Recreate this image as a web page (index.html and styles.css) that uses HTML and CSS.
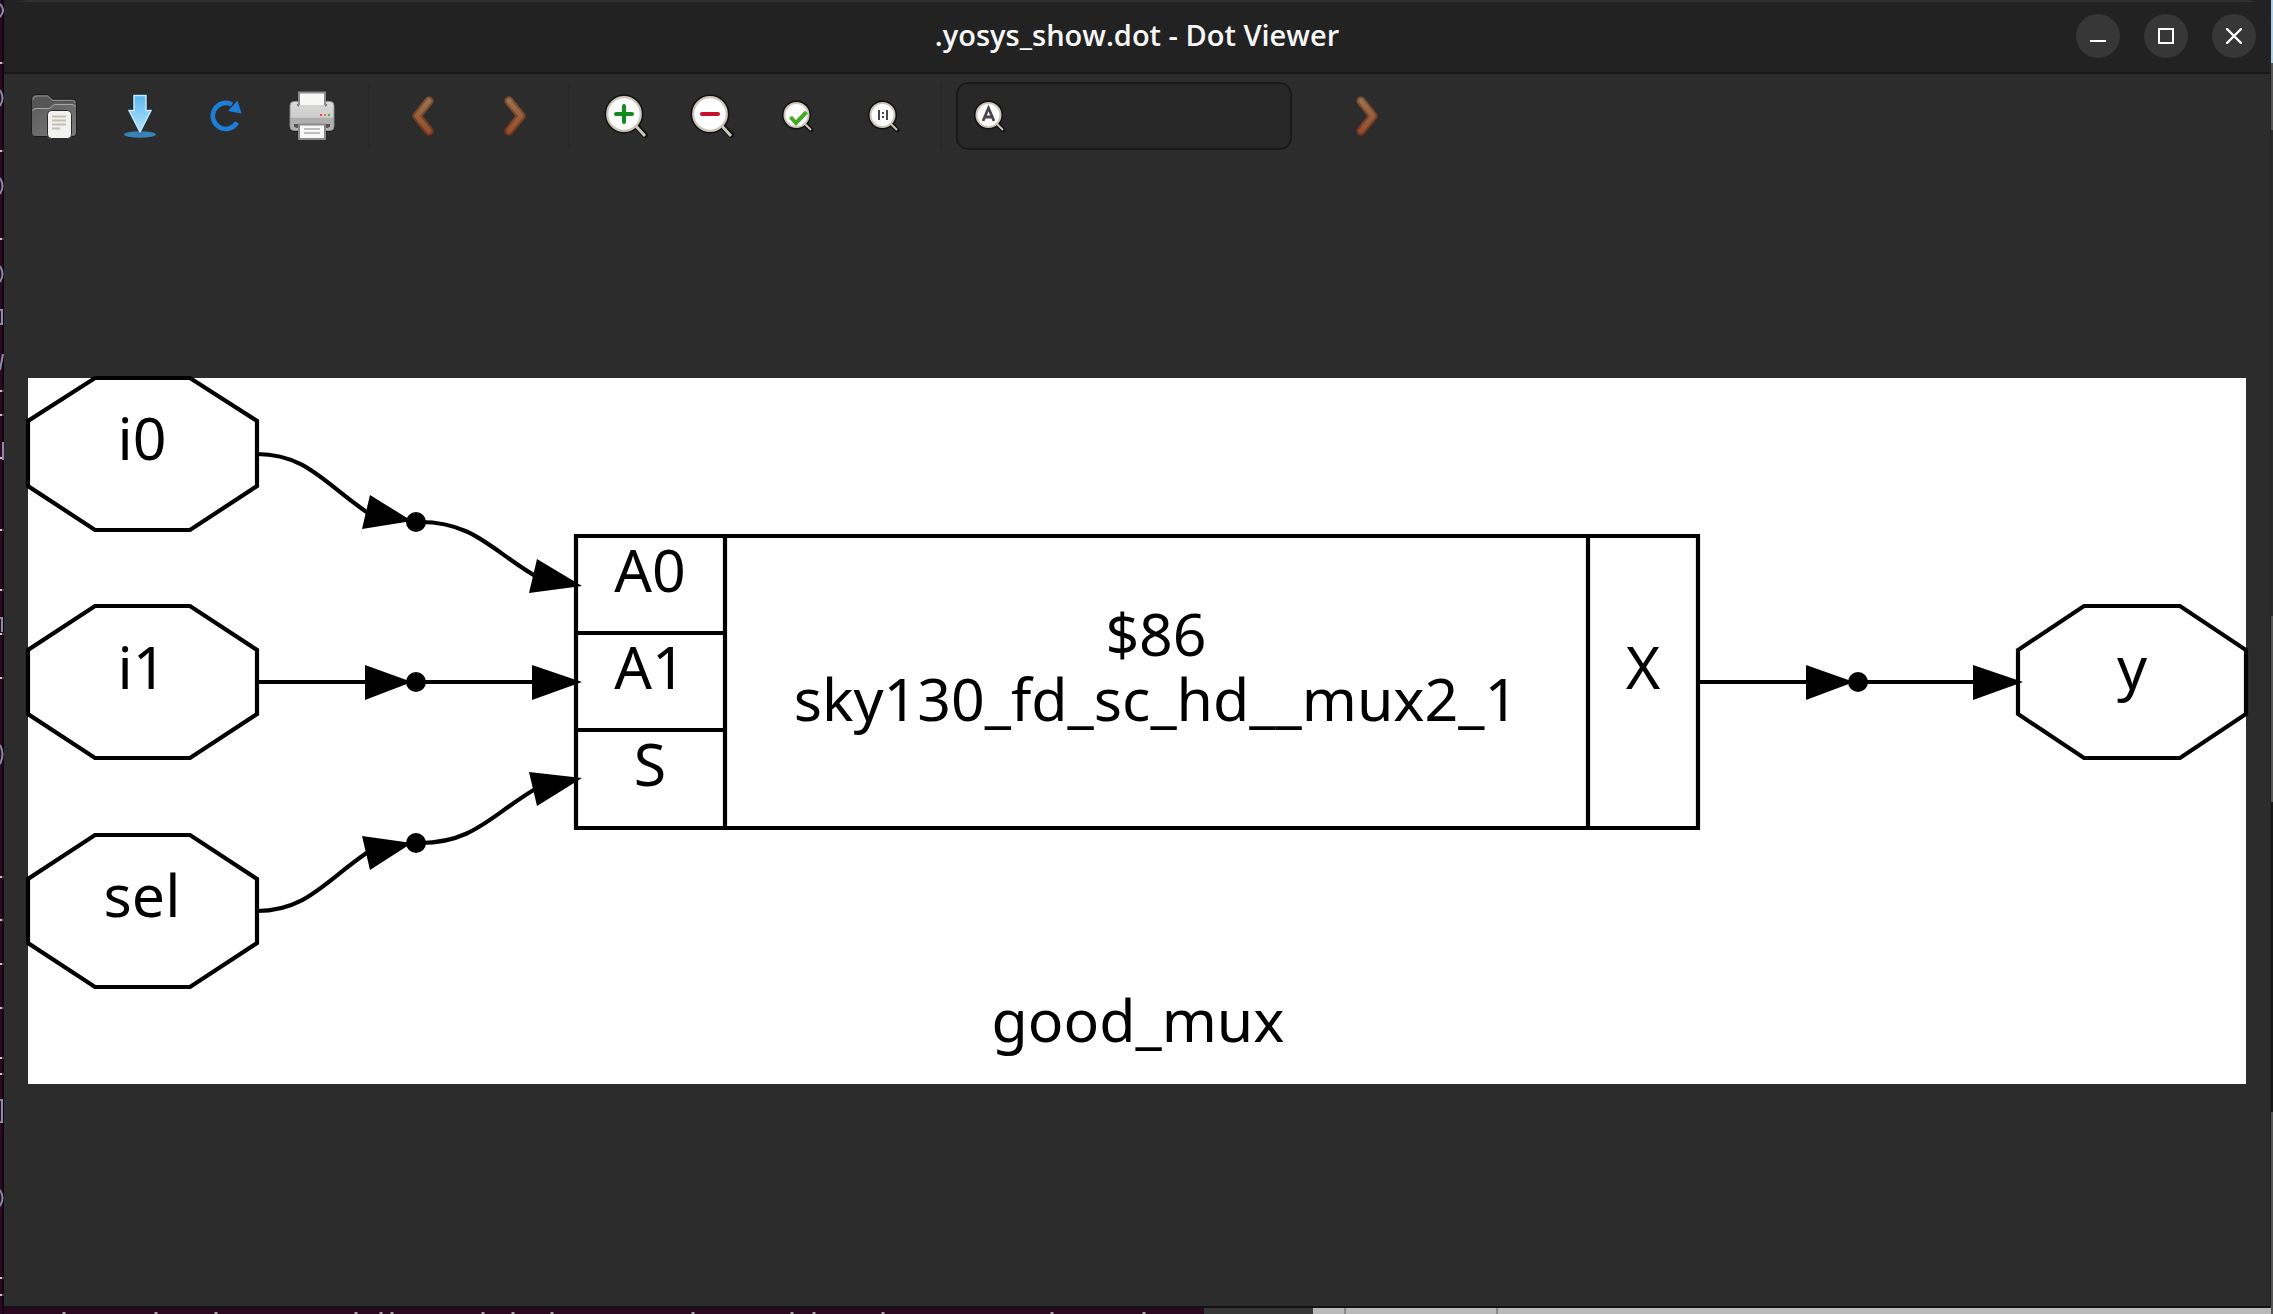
FILE: index.html
```html
<!DOCTYPE html>
<html lang="en">
<head>
<meta charset="utf-8">
<title>.yosys_show.dot - Dot Viewer</title>
<meta name="viewport" content="width=device-width, initial-scale=1">
<link rel="stylesheet" href="styles.css">
</head>
<body class="desktop">
<!-- slivers of the windows behind -->
<svg class="behind behind-left" width="4" height="1314" viewBox="0 0 4 1314" aria-hidden="true">
  <path d="M0 63h2M0 151h2M0 239h2M0 391h2M0 415h2M0 458h2M0 530h2M0 590h2M0 634h2M0 678h2M0 877h2M0 920h2M0 964h2M0 1008h2M0 1058h2M0 1074h2M0 1278h2M0 1295h2" stroke="#c9c4c8" stroke-width="2"/>
  <path d="M2 63h2M2 151h2M2 239h2M2 391h2M2 415h2M2 458h2M2 530h2M2 590h2M2 634h2M2 678h2M2 877h2M2 920h2M2 964h2M2 1008h2M2 1058h2M2 1074h2M2 1278h2M2 1295h2" stroke="#3c393b" stroke-width="2"/>
  <path d="M0 90q5 8 0 16M0 178q5 8 0 16M0 266q5 8 0 16M0 745q5 9 0 19M0 1190q5 8 0 16M0 4q6 6 0 13M0 370l3-16M0 310h2v14h-2M0 618h2v14M3 442v18M0 1100h2v22h-2" fill="none" stroke="#8b89a8" stroke-width="2"/>
</svg>
<svg class="behind behind-bottom" width="1204" height="6" viewBox="0 0 1204 6" aria-hidden="true">
  <path d="M64 4v2M156 4v2M216 4v2M356 4v2M381 4v2M392 4v2M483 4v2M513 4v2M552 4v2M693 4v2M792 4v2M814 4v2M883 4v2M1052 4v2M1144 4v2" stroke="#aaa5a9" stroke-width="3"/>
</svg>

<main class="window">
  <header class="titlebar">
    <h1 class="title">.yosys_show.dot - Dot Viewer</h1>
    <div class="controls">
      <button class="control" type="button" aria-label="Minimize"><svg width="16" height="16" viewBox="0 0 16 16"><path d="M0 13h16" stroke="#fff" stroke-width="2"/></svg></button>
      <button class="control" type="button" aria-label="Maximize"><svg width="16" height="16" viewBox="0 0 16 16"><path d="M1 1h14v14H1z" fill="none" stroke="#fff" stroke-width="2"/></svg></button>
      <button class="control" type="button" aria-label="Close"><svg width="16" height="16" viewBox="0 0 16 16"><path d="M1 1l14 14M15 1L1 15" stroke="#fff" stroke-width="2.4" stroke-linecap="round"/></svg></button>
    </div>
  </header>

  <div class="toolbar" role="toolbar" aria-label="Main">
    <button class="tool" type="button" aria-label="Open">
      <svg width="48" height="48" viewBox="0 0 48 48">
        <defs><linearGradient id="folder" x1="0" y1="0" x2="1" y2="1"><stop offset="0" stop-color="#5c5c5c"/><stop offset="1" stop-color="#7a7a7a"/></linearGradient></defs>
        <path d="M1.500 7Q1.500 2.500 6 2.500H18L23 7H42Q46.500 7 46.500 11V40Q46.500 44.500 42 44.500H6Q1.500 44.500 1.500 40Z" fill="#555" stroke="#1c1c1c"/>
        <path d="M3 8Q3 4 7 4H17.500L22.500 8.500H42Q45 8.500 45 11" fill="none" stroke="#8c8c8c"/>
        <path d="M2 20Q2 16 6 16H19L24 11.500H42Q46 11.500 46 15V40Q46 44 42 44H6Q2 44 2 40Z" fill="url(#folder)"/>
        <path d="M2.500 19Q3 16.500 6 16.500H19.500L24.500 12.500H42Q45 12.500 45.500 15" fill="none" stroke="#a8a8a8"/>
        <rect x="17.500" y="18.500" width="24" height="28" rx="4" fill="#f1f1f0" stroke="#2a2a2a"/>
        <path d="M22 24.500h14M22 28.500h14M22 32.500h14M22 36.500h8" stroke="#c4bfb0" stroke-width="2"/>
      </svg>
    </button>
    <button class="tool" type="button" aria-label="Export">
      <svg width="48" height="48" viewBox="0 0 48 48">
        <defs><linearGradient id="arrow" x1="0" y1="0" x2="0" y2="1"><stop offset="0" stop-color="#5bb8ee"/><stop offset="1" stop-color="#b4e4f8"/></linearGradient></defs>
        <ellipse cx="24" cy="42.500" rx="16" ry="3.200" fill="#3584b8"/>
        <path d="M16.500 2h15v15h6L24 42.500 11 17h5.500z" fill="#122633"/>
        <path d="M18 3.500h12v15h5L24 40 13 18.500h5z" fill="url(#arrow)" stroke="#c3eafa" stroke-width="1.500"/>
      </svg>
    </button>
    <button class="tool" type="button" aria-label="Reload">
      <svg width="48" height="48" viewBox="1 0 48 48">
        <path d="M36 30.500A13 13 0 1 1 31 12.500" fill="none" stroke="#1c7ed6" stroke-width="4.600"/>
        <path d="M36.500 8.500l4 13-13.500-2.500z" fill="#1c7ed6"/>
      </svg>
    </button>
    <button class="tool" type="button" aria-label="Print">
      <svg width="48" height="50" viewBox="0 0 48 50">
        <defs><linearGradient id="printer" x1="0" y1="0" x2="0" y2="1"><stop offset="0" stop-color="#dcdcdc"/><stop offset=".55" stop-color="#cdcdcd"/><stop offset=".56" stop-color="#adadad"/><stop offset="1" stop-color="#b4b4b4"/></linearGradient></defs>
        <rect x="1" y="10" width="46" height="31" rx="5" fill="#1d1d1d"/>
        <rect x="2" y="10.500" width="44" height="29" rx="4" fill="url(#printer)" stroke="#909090"/>
        <path d="M9 15h30v-2H9z" fill="#777"/>
        <rect x="11" y="1.500" width="26" height="13.500" fill="#f7f7f5" stroke="#8b8b8b" stroke-width="2"/>
        <path d="M11 14h26v2H11z" fill="#d3d3d3"/>
        <path d="M6 33h36v3l-3 1H9l-3-1z" fill="#555"/>
        <path d="M11 33.500h26V48H11z" fill="#f7f7f5" stroke="#8b8b8b" stroke-width="2"/>
        <path d="M16 38h16M16 42h16" stroke="#bdbdbd" stroke-width="2"/>
        <path d="M32 24h2" stroke="#e8465a" stroke-width="2"/><path d="M36 24h2" stroke="#ef7350" stroke-width="2"/><path d="M40 24h2" stroke="#58b047" stroke-width="2"/>
      </svg>
    </button>

    <span class="separator"></span>

    <div class="history">
      <button class="tool tool-nav" type="button" aria-label="Back">
        <svg width="24" height="42" viewBox="0 0 24 42">
          <defs><linearGradient id="rust" gradientUnits="userSpaceOnUse" x1="0" y1="0" x2="0" y2="42"><stop offset="0" stop-color="#98795a"/><stop offset=".5" stop-color="#96603c"/><stop offset="1" stop-color="#934a28"/></linearGradient>
          <linearGradient id="rustedge" gradientUnits="userSpaceOnUse" x1="0" y1="0" x2="0" y2="42"><stop offset="0" stop-color="#80522f"/><stop offset="1" stop-color="#78321f"/></linearGradient></defs>
          <path d="M18 6L6 21l12 15" fill="none" stroke="url(#rustedge)" stroke-width="9" stroke-linecap="round" stroke-linejoin="round"/>
          <path d="M18 6L6 21l12 15" fill="none" stroke="url(#rust)" stroke-width="5" stroke-linecap="round" stroke-linejoin="round"/>
        </svg>
      </button>
      <button class="tool tool-nav" type="button" aria-label="Forward">
        <svg width="24" height="42" viewBox="0 0 24 42">
          <path d="M6 6l12 15L6 36" fill="none" stroke="url(#rustedge)" stroke-width="9" stroke-linecap="round" stroke-linejoin="round"/>
          <path d="M6 6l12 15L6 36" fill="none" stroke="url(#rust)" stroke-width="5" stroke-linecap="round" stroke-linejoin="round"/>
        </svg>
      </button>
    </div>

    <span class="separator"></span>

    <button class="tool" type="button" aria-label="Zoom in">
      <svg width="48" height="48" viewBox="0 -1 48 48">
        <path d="M34 33l9 9" stroke="#111" stroke-width="6" stroke-linecap="round"/>
        <circle cx="22" cy="21" r="19.500" fill="#111"/>
        <path d="M33 32l10 11" stroke="#cbc6ba" stroke-width="3"/>
        <circle cx="22" cy="21" r="16.800" fill="#fff" stroke="#cbc6ba" stroke-width="2.200"/>
        <path d="M14 21h16M22 13v16" stroke="#11891f" stroke-width="4" stroke-linecap="round"/>
      </svg>
    </button>
    <button class="tool" type="button" aria-label="Zoom out">
      <svg width="48" height="48" viewBox="0 -1 48 48">
        <path d="M34 33l9 9" stroke="#111" stroke-width="6" stroke-linecap="round"/>
        <circle cx="22" cy="21" r="19.500" fill="#111"/>
        <path d="M33 32l10 11" stroke="#cbc6ba" stroke-width="3"/>
        <circle cx="22" cy="21" r="16.800" fill="#fff" stroke="#cbc6ba" stroke-width="2.200"/>
        <path d="M14 21h16" stroke="#c8102e" stroke-width="4" stroke-linecap="round"/>
      </svg>
    </button>
    <button class="tool" type="button" aria-label="Zoom to fit">
      <svg width="32" height="32" viewBox="0 0 32 32">
        <path d="M24 25l5 5" stroke="#111" stroke-width="5" stroke-linecap="round"/>
        <circle cx="14.500" cy="15" r="14.500" fill="#111"/>
        <path d="M23 24l6 6" stroke="#cbc6ba" stroke-width="2"/>
        <circle cx="14.500" cy="15" r="12" fill="#fff" stroke="#cbc6ba" stroke-width="2"/>
        <path d="M8.500 17l5.500 6L24.500 12" fill="none" stroke="#46a926" stroke-width="4"/>
      </svg>
    </button>
    <button class="tool" type="button" aria-label="Zoom to original size">
      <svg width="32" height="32" viewBox="0 0 32 32">
        <path d="M24 25l5 5" stroke="#111" stroke-width="5" stroke-linecap="round"/>
        <circle cx="14.500" cy="15" r="14.500" fill="#111"/>
        <path d="M23 24l6 6" stroke="#cbc6ba" stroke-width="2"/>
        <circle cx="14.500" cy="15" r="12" fill="#fff" stroke="#cbc6ba" stroke-width="2"/>
        <path d="M11 10v10M19 10v10M15 12v2M15 16v2" stroke="#484848" stroke-width="2"/>
      </svg>
    </button>

    <span class="separator"></span>

    <label class="search">
      <svg width="32" height="32" viewBox="0 0 32 32" aria-hidden="true">
        <path d="M24 25l5 5" stroke="#111" stroke-width="5" stroke-linecap="round"/>
        <circle cx="14.500" cy="15" r="14.500" fill="#111"/>
        <path d="M23 24l6 6" stroke="#cbc6ba" stroke-width="2"/>
        <circle cx="14.500" cy="15" r="12" fill="#fff" stroke="#cbc6ba" stroke-width="2"/>
        <path d="M9 21l5.500-13L20 21M11 17h7" fill="none" stroke="#484848" stroke-width="2.800"/>
      </svg>
      <input class="search-input" type="text" aria-label="Find">
    </label>
    <button class="tool tool-next" type="button" aria-label="Find next">
      <svg width="24" height="42" viewBox="0 0 24 42">
        <path d="M6 6l12 15L6 36" fill="none" stroke="url(#rustedge)" stroke-width="9" stroke-linecap="round" stroke-linejoin="round"/>
        <path d="M6 6l12 15L6 36" fill="none" stroke="url(#rust)" stroke-width="5" stroke-linecap="round" stroke-linejoin="round"/>
      </svg>
    </button>
  </div>

  <section class="canvas">
    <svg class="graph" viewBox="28 379 2218 706" role="img" aria-label="good_mux schematic">
      <rect x="28" y="379" width="2218" height="706" fill="#fff"/>
      <g class="shape">
        <path d="M95 379H190L257 422V487L190 531H95L28 487V422Z"/>
        <path d="M95 607H190L257 651V715L190 759H95L28 715V651Z"/>
        <path d="M95 836H190L257 880V944L190 988H95L28 944V880Z"/>
        <path d="M2084 607H2180L2246 651V715L2180 759H2084L2018 715V651Z"/>
        <path d="M576 537H1698V829H576ZM725 537V829M1588 537V829M576 634H725M576 731H725"/>
        <path d="M257 455C306 455 325 485 368 514M420 523C474 523 492 552 537 578"/>
        <path d="M257 912C306 912 325 882 368 853M420 844C474 844 492 815 537 789"/>
        <path d="M257 683H370M420 683H540M1698 683H1810M1860 683H1980"/>
      </g>
      <g class="solid">
        <path d="M370 496L362 530L412 522ZM537 560L529 594L582 587Z"/>
        <path d="M370 871L362 837L412 844ZM537 807L529 773L582 779Z"/>
        <path d="M365 666V701L412 683ZM532 666V701L582 683ZM1806 666V701L1854 683ZM1973 666V701L2023 683Z"/>
        <circle cx="416" cy="523" r="10"/><circle cx="416" cy="683" r="10"/><circle cx="416" cy="844" r="10"/><circle cx="1858" cy="683" r="10"/>
      </g>
      <g class="label">
        <text x="142" y="461">i0</text>
        <text x="142" y="690">i1</text>
        <text x="142" y="918">sel</text>
        <text x="650" y="593">A0</text>
        <text x="650" y="690">A1</text>
        <text x="650" y="787">S</text>
        <text x="1156" y="657">$86</text>
        <text x="1156" y="722">sky130_fd_sc_hd__mux2_1</text>
        <text x="1643" y="690">X</text>
        <text x="2132" y="690">y</text>
        <text x="1138" y="1043">good_mux</text>
      </g>
    </svg>
  </section>
</main>
</body>
</html>
```
FILE: styles.css
```css
* { box-sizing: border-box; }

.desktop {
  position: relative;
  display: flex;
  min-height: 100vh;
  margin: 0;
  padding: 0 3px 6px 4px;
  overflow-x: hidden;
  font-family: "Noto Sans", "Open Sans", sans-serif;
  background:
    linear-gradient(90deg, #2c0a22 2px, #110410 2px) left / 4px 100% no-repeat,
    linear-gradient(#a9cfe6 63px, #565656 63px 130px, #2a2a2a 130px 616px, #555 616px 802px, #161616 802px 1112px, #555 1112px) right / 2px 100% no-repeat,
    linear-gradient(90deg, #2a0820 1204px, #363636 1204px 1313px, #b9b9b9 1313px 1344px, #888 1344px 1346px, #b9b9b9 1346px 1496px, #888 1496px 1498px, #b9b9b9 1498px) bottom / 100% 6px no-repeat,
    #222;
}

.behind { position: absolute; left: 0; overflow: hidden; }
.behind-left { top: 0; height: 100%; }
.behind-bottom { bottom: 0; }

.window {
  position: relative;
  flex: 1;
  display: flex;
  flex-direction: column;
  min-width: 0;
  overflow: hidden;
  background: #2c2c2c;
  border-bottom: 2px solid #141214;
  border-radius: 24px 24px 0 0;
}

.titlebar {
  display: grid;
  grid-template-columns: 1fr auto 1fr;
  align-items: center;
  height: 74px;
  padding: 0 14px 2px;
  background: #222;
  border-top: 2px solid #303030;
  border-bottom: 2px solid #181818;
}

.title {
  grid-column: 2;
  margin: 0;
  padding-bottom: 2px;
  font-family: "Open Sans", "Noto Sans", sans-serif;
  font-size: 29px;
  font-weight: 600;
  line-height: 40px;
  color: #f7f7f7;
}

.controls { display: flex; justify-content: flex-end; gap: 24px; }

.control {
  display: grid;
  place-items: center;
  width: 44px;
  height: 44px;
  padding: 0;
  border: 0;
  border-radius: 50%;
  background: #373737;
}

.toolbar {
  display: flex;
  align-items: stretch;
  height: 84px;
  padding: 8px 7px;
}

.tool {
  display: grid;
  place-items: center;
  flex: none;
  width: 86px;
  padding: 0;
  border: 0;
  background: none;
}

.history { display: flex; gap: 12px; }
.tool-nav { width: 80px; }
.tool-next { margin-left: 32px; }

.separator { flex: none; width: 2px; margin: 0 13px; background: #282828; }

.search {
  display: flex;
  align-items: center;
  gap: 12px;
  width: 336px;
  margin-left: 1px;
  padding: 0 16px;
  border: 2px solid #1a1a1a;
  border-radius: 12px;
  background: #272727;
}

.search svg { flex: none; }

.search-input {
  flex: 1;
  min-width: 0;
  height: 40px;
  padding: 0;
  border: 0;
  outline: 0;
  background: none;
  color: #f7f7f7;
  font: inherit;
  font-size: 28px;
}

.canvas {
  flex: 1;
  display: flex;
  align-items: center;
  padding: 0 24px 2px;
}

.graph { display: block; width: 100%; height: auto; overflow: visible; }
.shape { fill: none; stroke: #000; stroke-width: 4.2; }
.solid { fill: #000; }
.label { font-size: 59px; text-anchor: middle; fill: #000; }
```
